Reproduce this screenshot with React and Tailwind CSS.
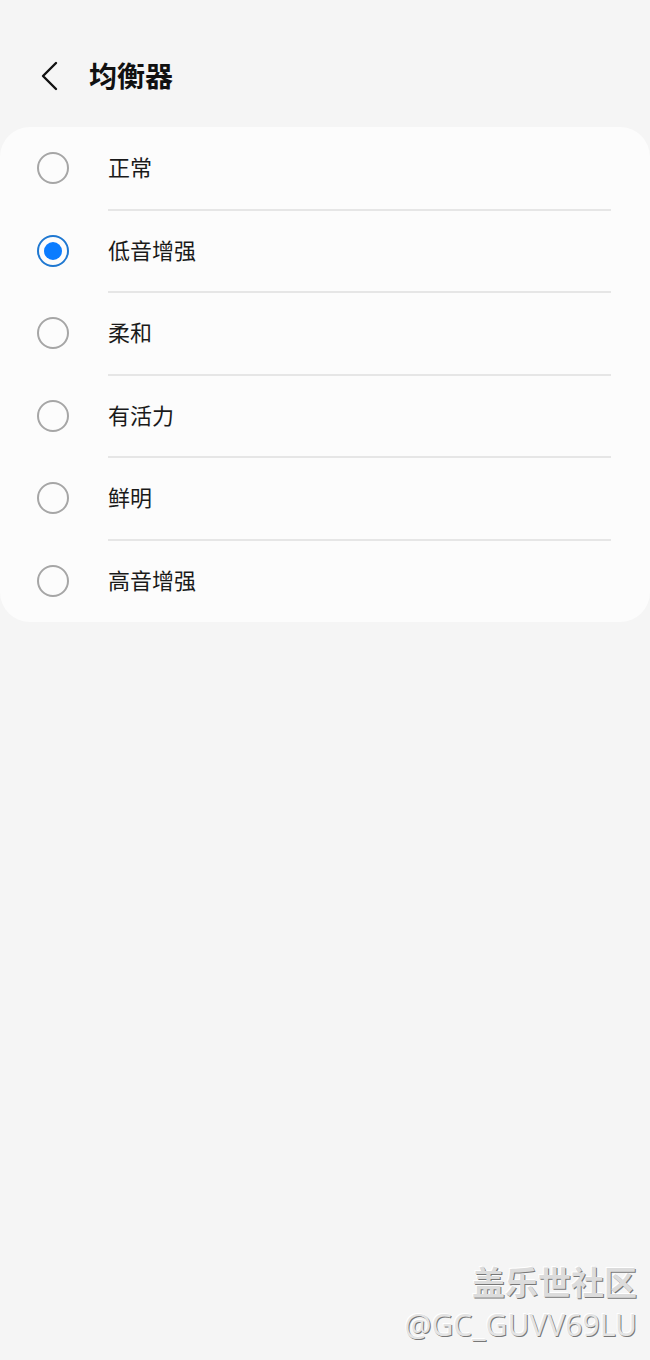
import { useState } from 'react';

const options = ['正常', '低音增强', '柔和', '有活力', '鲜明', '高音增强'];

function Radio({ checked }) {
  if (checked) {
    return (
      <div className="w-[32px] h-[32px] rounded-full border-2 border-[#1f78d1] flex items-center justify-center">
        <div className="w-[18px] h-[18px] rounded-full bg-[#0a7cff]" />
      </div>
    );
  }
  return <div className="w-[32px] h-[32px] rounded-full border-2 border-[#a6a6a6]" />;
}

export default function App() {
  const [selected, setSelected] = useState(1);

  return (
    <div
      className="w-[650px] h-[1360px] bg-[#f5f5f5] flex flex-col"
      style={{ fontFamily: '"Noto Sans CJK SC", "Noto Sans", sans-serif' }}
    >
      {/* header */}
      <div className="h-[127px] flex items-center pl-[38px] pt-[22px]">
        <svg width="22" height="30" viewBox="0 0 22 30" fill="none" className="mr-[29px] mt-[2px]">
          <path d="M18 2 L5 15 L18 28" stroke="#111" strokeWidth="2.4" strokeLinecap="round" strokeLinejoin="round" />
        </svg>
        <h1 className="text-[28px] font-bold text-[#111]">均衡器</h1>
      </div>

      {/* options card */}
      <div className="bg-[#fcfcfc] rounded-[30px] flex flex-col">
        {options.map((label, i) => (
          <button
            key={label}
            onClick={() => setSelected(i)}
            className="h-[82.5px] flex items-center text-left relative"
          >
            <div className="w-[108px] flex justify-center pr-[2px]">
              <Radio checked={selected === i} />
            </div>
            <span className="text-[22px] text-[#1a1a1a] mb-[3px]">{label}</span>
            {i < options.length - 1 && (
              <div className="absolute left-[108px] right-[39px] bottom-[-1px] h-[2px] bg-[#e6e6e6]" />
            )}
          </button>
        ))}
      </div>

      <div className="flex-1" />

      {/* watermark */}
      <div className="flex flex-col items-end pr-[13px] pb-[20px] leading-none">
        <span
          className="text-[33px] font-bold text-[#dcdcdc] mb-[12px]"
          style={{ textShadow: '1px 1px 0 #777, -1px -1px 0 #fff' }}
        >
          盖乐世社区
        </span>
        <span
          className="text-[30px] text-[#e4e4e4]"
          style={{ fontFamily: '"Noto Sans", sans-serif', textShadow: '1px 1px 0 #777, -1px -1px 0 #fff' }}
        >
          @GC_GUVV69LU
        </span>
      </div>
    </div>
  );
}
